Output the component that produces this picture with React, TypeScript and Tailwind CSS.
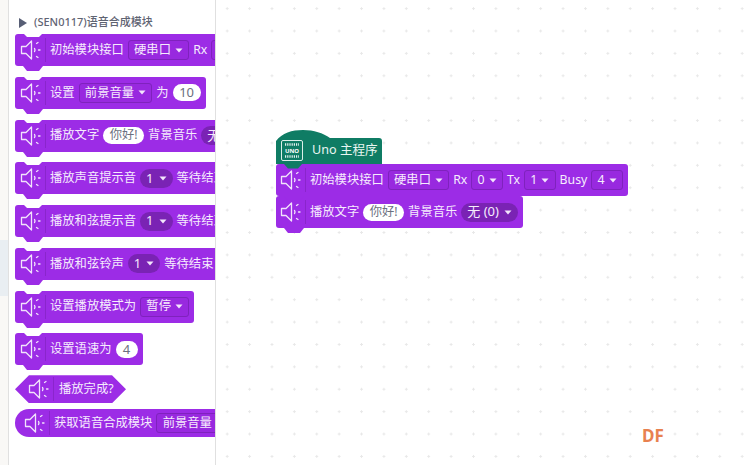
import React from "react";

const Speaker = () => (
  <svg width="21" height="24" viewBox="0 0 21 24" fill="none" stroke="#f1e2fb" strokeWidth="1.3" strokeLinejoin="round" strokeLinecap="round">
    <path d="M1.5 8.5H6L11.5 3V21L6 15.5H1.5Z" />
    <path d="M14.5 10.5Q15.6 12 14.5 13.5" />
    <path d="M16.5 5.5L18 4.5M18.5 12H20M16.5 18.5L18 19.5" />
  </svg>
);

const Caret = () => (
  <svg width="8" height="5" viewBox="0 0 8 5" className="shrink-0">
    <path d="M0.5 0.5H7.5L4 4.5Z" fill="#f3e6fc" />
  </svg>
);

const Drop = ({ children }: { children: React.ReactNode }) => (
  <span className="flex h-[20px] shrink-0 items-center gap-[4px] rounded-[3px] border border-[#7f22bd] bg-[#9829df] px-[5.25px]">
    {children}
    <Caret />
  </span>
);

const Pill = ({ children }: { children: React.ReactNode }) => (
  <span className="flex h-[19px] shrink-0 items-center gap-[5px] rounded-full bg-[#7a23b4] px-[6px] text-[13px]">
    {children}
    <Caret />
  </span>
);

const Field = ({ children }: { children: React.ReactNode }) => (
  <span className="flex h-[17px] min-w-[22px] shrink-0 items-center justify-center rounded-full bg-white px-[6.5px] text-[#6b7080]">{children}</span>
);

const Icon = ({ tight = false }: { tight?: boolean }) => (
  <span className={`flex h-[24px] shrink-0 items-center border-r border-[#8a25cc] pr-[4px] ${tight ? "pl-[4px]" : "pl-[5px]"}`}>
    <Speaker />
  </span>
);

const Block = ({
  children,
  notch = true,
  bump = true,
  tight = false,
  z = "",
}: {
  children: React.ReactNode;
  notch?: boolean;
  bump?: boolean;
  tight?: boolean;
  z?: string;
}) => (
  <div className={`relative flex h-[32px] w-max shrink-0 items-center gap-[4px] rounded-[3px] bg-[#9c2ce6] pr-[5px] text-[12.3px] text-[#f6ecfd] ${z}`}>
    {notch && (
      <svg width="18" height="3" viewBox="0 0 18 3" className="absolute top-0 left-[9px]">
        <path d="M0 0L3 3H15L18 0Z" fill="#ffffff" />
      </svg>
    )}
    {bump && (
      <svg width="20" height="5" viewBox="0 0 20 5" className="absolute top-full left-[8px]">
        <path d="M0 0L4 5H16L20 0Z" fill="#9c2ce6" />
      </svg>
    )}
    <Icon tight={tight} />
    {children}
  </div>
);

const Hat = () => (
  <div className="relative z-20 flex h-[34px] w-[106px] items-end">
    <svg width="106" height="39" viewBox="0 0 106 39" className="absolute top-0 left-0">
      <path d="M0 34V11C6 3 16 0 27 0C38 0 47 3 54 8H103Q106 8 106 11V34H26L22 38.5H12L8 34Z" fill="#0f7c64" />
    </svg>
    <span className="relative mb-[3px] ml-[5px] flex h-[21px] w-[22px] flex-col items-center justify-between rounded-[2px] border border-[#dcefe9] py-[2px] text-[6px] leading-none font-bold text-white">
      <svg width="14" height="3" viewBox="0 0 14 3">
        <path d="M0 1.5H14" stroke="#e4f1ee" strokeWidth="2.4" strokeDasharray="1.2 1" />
      </svg>
      <span>UNO</span>
      <svg width="14" height="3" viewBox="0 0 14 3">
        <path d="M0 1.5H14" stroke="#e4f1ee" strokeWidth="2.4" strokeDasharray="1.2 1" />
      </svg>
    </span>
    <span className="relative mb-[5px] ml-[9px] text-[12.6px] leading-[18px] text-[#e9f6f2]">Uno 主程序</span>
  </div>
);

export default function App() {
  return (
    <div className="flex h-[465px] w-[750px] overflow-hidden bg-white font-['Noto_Sans','Noto_Sans_CJK_SC',sans-serif]">
      <div className="flex w-[8px] shrink-0 flex-col bg-[#f9f8f6]">
        <div className="mt-[240px] h-[56px] bg-[#e9eef2]" />
      </div>
      <div className="flex w-[208px] shrink-0 flex-col items-start overflow-hidden border-x border-[#e0e0e0] pl-[6px]">
        <div className="mt-[15px] mb-[4px] flex h-[15px] items-center gap-[7px] pl-[4px] text-[11px] font-medium text-[#5f6473]">
          <svg width="8" height="10" viewBox="0 0 8 10">
            <path d="M0 0L8 5L0 10Z" fill="#575e75" />
          </svg>
          <span>(SEN0117)语音合成模块</span>
        </div>
        <div className="flex flex-col gap-[10.75px]">
          <Block>
            <span>初始模块接口</span>
            <Drop>硬串口</Drop>
            <span>Rx</span>
            <Drop>0</Drop>
            <span>Tx</span>
            <Drop>1</Drop>
          </Block>
          <Block>
            <span>设置</span>
            <Drop>前景音量</Drop>
            <span>为</span>
            <Field>
              <span className="text-[13px]">10</span>
            </Field>
          </Block>
          <Block>
            <span>播放文字</span>
            <Field>你好!</Field>
            <span>背景音乐</span>
            <Pill>无 (0)</Pill>
          </Block>
          <Block>
            <span>播放声音提示音</span>
            <Pill>1</Pill>
            <span>等待结束</span>
          </Block>
          <Block>
            <span>播放和弦提示音</span>
            <Pill>1</Pill>
            <span>等待结束</span>
          </Block>
          <Block>
            <span>播放和弦铃声</span>
            <Pill>1</Pill>
            <span>等待结束</span>
          </Block>
          <Block>
            <span>设置播放模式为</span>
            <Drop>暂停</Drop>
          </Block>
          <Block>
            <span>设置语速为</span>
            <Field>
              <span className="text-[13px]">4</span>
            </Field>
          </Block>
        </div>
        <div className="mt-[10px] flex h-[28px] w-[111px] items-center bg-[#9c2ce6] pl-[8px] text-[12.3px] text-[#f6ecfd] [clip-path:polygon(14px_0,calc(100%-14px)_0,100%_50%,calc(100%-14px)_100%,14px_100%,0_50%)]">
          <Icon />
          <span className="ml-[5px]">播放完成?</span>
        </div>
        <div className="mt-[6px] flex h-[28px] w-max shrink-0 items-center gap-[4px] rounded-full bg-[#9c2ce6] pr-[14px] pl-[4px] text-[12.3px] text-[#f6ecfd]">
          <Icon />
          <span>获取语音合成模块</span>
          <Drop>前景音量</Drop>
        </div>
      </div>
      <div className="relative flex-1 bg-white bg-[radial-gradient(circle,#e8e8e8_1px,transparent_1.3px)] bg-[size:22.4px_22.4px] bg-[position:0_-2.6px]">
        <div className="absolute top-[130px] left-[60px] flex flex-col">
          <Hat />
          <Block notch={false} tight z="z-10">
            <span>初始模块接口</span>
            <Drop>硬串口</Drop>
            <span>Rx</span>
            <Drop>0</Drop>
            <span>Tx</span>
            <Drop>1</Drop>
            <span>Busy</span>
            <Drop>4</Drop>
          </Block>
          <Block notch={false} tight>
            <span>播放文字</span>
            <Field>你好!</Field>
            <span>背景音乐</span>
            <Pill>无 (0)</Pill>
          </Block>
        </div>
        <span className="absolute top-[427px] left-[426px] text-[17px] leading-[17px] font-bold text-[#e8814f]">DF</span>
      </div>
    </div>
  );
}
